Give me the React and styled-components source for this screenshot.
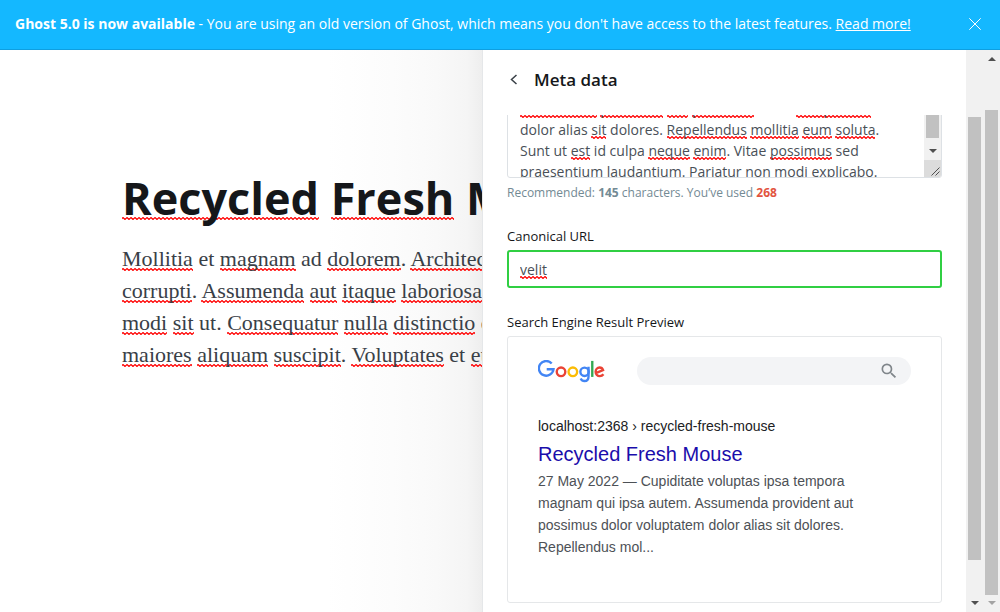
import React from "react";
import styled, { createGlobalStyle } from "styled-components";
import { MdSearch } from "react-icons/md";

const wave = `url("data:image/svg+xml,${encodeURIComponent(
  '<svg xmlns="http://www.w3.org/2000/svg" width="4" height="3"><path d="M-1 3L1 1L3 3L5 1" transform="translate(0 -0.5)" fill="none" stroke="#f00" stroke-width="1.2"/></svg>'
)}")`;

const GlobalStyle = createGlobalStyle`
  *, *::before, *::after { box-sizing: border-box; }
  html, body { margin: 0; height: 100%; }
  #root { height: 100%; }
  body {
    font-family: "Open Sans", "Noto Sans", sans-serif;
    color: #15171a;
    background: #fff;
    overflow: hidden;
  }
`;

const Page = styled.div`
  display: flex;
  flex-direction: column;
  height: 100vh;
`;

const Banner = styled.header`
  display: flex;
  align-items: center;
  justify-content: space-between;
  flex: none;
  height: 50px;
  padding: 0 18px 2px 15px;
  border-bottom: 1px solid #0f9fe0;
  background: #14b8ff;
  color: #fff;
  font-size: 14px;
  line-height: 20px;
  white-space: nowrap;
`;

const BannerText = styled.p`
  margin: 0;
`;

const BannerLink = styled.a`
  color: inherit;
  text-decoration: underline;
`;

const IconButton = styled.button`
  display: flex;
  align-items: center;
  justify-content: center;
  width: ${(p) => p.$size}px;
  height: ${(p) => p.$size}px;
  padding: 0;
  border: 0;
  background: none;
  color: inherit;
`;

const Workspace = styled.div`
  display: flex;
  flex: 1;
  min-height: 0;
`;

const Editor = styled.main`
  flex: 1;
  min-width: 0;
  overflow: hidden;
  padding: 116px 0 0 122px;
  background: linear-gradient(to left, #eee 0, #f5f5f5 15px, #f9f9f9 45px, #fcfcfc 90px, #fff 155px);
  white-space: nowrap;
`;

const PostTitle = styled.h1`
  margin: 0;
  font-size: 45px;
  line-height: 64px;
  font-weight: 700;
`;

const PostBody = styled.p`
  margin: 13px 0 0;
  font-family: "Liberation Serif", serif;
  font-size: 22px;
  line-height: 32px;
  color: #394047;
`;

const Misspelt = styled.span`
  background: ${wave} repeat-x 0 calc(100% - ${(p) => p.$lift}px);
`;

const Panel = styled.aside`
  display: flex;
  flex-direction: column;
  flex: none;
  width: 484px;
  border-left: 1px solid #e5e7e9;
  background: #fff;
`;

const PanelHeader = styled.div`
  display: flex;
  align-items: center;
  gap: 10px;
  flex: none;
  height: 65px;
  padding: 0 24px 6px 20px;
  color: #394047;
`;

const PanelTitle = styled.h2`
  margin: 0;
  color: #15171a;
  font-size: 17px;
  line-height: 24px;
  font-weight: 600;
`;

const PanelBody = styled.form`
  flex: 1;
  min-height: 0;
  overflow: hidden;
  padding: 0 24px;
`;

const Field = styled.div`
  display: flex;
  flex-direction: column;
  margin-bottom: 25px;
`;

const DescriptionField = styled(Field)`
  margin: -27px 0 24px;
`;

const Label = styled.label`
  margin-bottom: 5px;
  font-size: 13px;
  line-height: 18px;
`;

const Control = styled.div`
  display: grid;
  grid-template-columns: 1fr ${(p) => (p.$scroll ? "17px" : "")};
  height: ${(p) => p.$height}px;
  border: ${(p) => (p.$valid ? "2px solid #30cf43" : "1px solid #dde1e5")};
  border-radius: 3px;
  overflow: hidden;
  font-family: "Open Sans", "Noto Sans", sans-serif;
  font-size: 14px;
  line-height: 21px;
`;

const textLayer = `
  grid-area: 1 / 1;
  width: 100%;
  min-width: 0;
  height: 100%;
  margin: 0;
  border: 0;
  outline: 0;
  background: transparent;
  color: #495057;
  font: inherit;
`;

const TextArea = styled.textarea`
  ${textLayer}
  padding: 9px 12px;
  white-space: pre;
  overflow: hidden;
  resize: none;
`;

const TextInput = styled.input`
  ${textLayer}
  padding: 1px 11px 0;
`;

const Marks = styled.div`
  display: flex;
  flex-direction: column;
  grid-area: 1 / 1;
  overflow: hidden;
  padding: ${(p) => p.$pad};
`;

const MarkLine = styled.div`
  display: flex;
  flex: none;
  align-items: flex-end;
  height: 21px;
  padding-bottom: 1px;
`;

const Mark = styled.span`
  height: 3px;
  background: ${wave} repeat-x;
`;

const AreaScroll = styled.div`
  display: flex;
  flex-direction: column;
  align-items: center;
  grid-area: 1 / 2;
  background: #f1f1f1;
`;

const AreaThumb = styled.div`
  flex: 1;
  width: 13px;
  background: #c1c1c1;
`;

const AreaDown = styled.div`
  display: flex;
  align-items: center;
  justify-content: center;
  height: 22px;
  padding-top: 4px;
  color: #505050;
`;

const Grip = styled.div`
  display: flex;
  align-items: flex-end;
  justify-content: flex-end;
  width: 100%;
  height: 17px;
  padding: 0 1px 1px 0;
  background: #dcdcdc;
`;

const Hint = styled.p`
  margin: 5px 0 0;
  color: #738a94;
  font-size: 12px;
  line-height: 20px;
`;

const Over = styled.b`
  color: #e25440;
`;

const Card = styled.section`
  padding: 20px 30px 44px;
  border: 1px solid #e5e7e9;
  border-radius: 3px;
  font-family: "Liberation Sans", Arial, sans-serif;
`;

const CardTop = styled.div`
  display: flex;
  align-items: center;
  gap: 32px;
  margin-bottom: 30px;
`;

const SearchPill = styled.div`
  display: flex;
  align-items: center;
  justify-content: flex-end;
  flex: 1;
  height: 28px;
  padding-right: 12px;
  border-radius: 14px;
  background: #f3f4f6;
  color: #80868b;
`;

const ResultUrl = styled.div`
  color: #202124;
  font-size: 14px;
  line-height: 22px;
`;

const ResultTitle = styled.a`
  display: block;
  margin: 4px 0 3px;
  color: #1a0dab;
  font-size: 20px;
  line-height: 26px;
  text-decoration: none;
`;

const ResultText = styled.p`
  margin: 0;
  padding-right: 30px;
  color: #4d5156;
  font-size: 14px;
  line-height: 22px;
`;

const Track = styled.div`
  display: flex;
  flex-direction: column;
  align-items: center;
  flex: none;
  width: 17px;
  padding: 7px 0;
  background: #f1f1f1;
  color: #505050;
`;

const Thumb = styled.div`
  flex: 1;
  width: 13px;
  margin: ${(p) => p.$margin};
  background: #c1c1c1;
`;

const Arrow = ({ up, faint }) => (
  <svg width="8" height="4" viewBox="0 0 8 4" aria-hidden="true">
    <path d={up ? "M4 0L8 4H0z" : "M0 0H8L4 4z"} fill={faint ? "#a3a3a3" : "currentColor"} />
  </svg>
);

const GoogleLogo = () => (
  <svg width="67" height="23" viewBox="0 0 272 92" role="img" aria-label="Google" fill="none" strokeWidth="9.6">
    <path d="M55.6 13.3A29.75 29.75 0 1 0 63 36.7H35.3" stroke="#4285f4" />
    <circle cx="93.5" cy="47.2" r="17.4" stroke="#ea4335" />
    <circle cx="141.5" cy="47.2" r="17.4" stroke="#fbbc05" />
    <circle cx="189" cy="47.2" r="17" stroke="#4285f4" />
    <path d="M205.1 26.3V66C205.1 78 199 84.700 188.700 84.700C181 84.700 176 80 173.200 74.400" stroke="#4285f4" />
    <path d="M220.300 3V68" stroke="#34a853" />
    <path d="M265.800 57C262 62 257.500 64.600 251.100 64.600C241 64.600 233.900 57 233.900 47.200C233.900 37 241 29.800 250 29.800C257 29.800 262 34 264.200 40.600L237 51.900" stroke="#ea4335" />
  </svg>
);

// Splits on *word* markers and underlines the marked words.
const Spelled = ({ text, lift }) =>
  text.split("*").map((part, i) =>
    i % 2 ? (
      <Misspelt key={i} $lift={lift}>
        {part}
      </Misspelt>
    ) : (
      part
    )
  );

const measure = (() => {
  const context = document.createElement("canvas").getContext("2d");
  return (text) => {
    context.font = '14px "Open Sans"';
    return context.measureText(text).width;
  };
})();

// Form fields hold plain text, so their underlines are measured and laid behind it.
const SpellMarks = ({ text, pad }) => (
  <Marks $pad={pad} aria-hidden="true">
    {text.split("\n").map((line) => (
      <MarkLine key={line}>
        {line.split("*").map((part, i) => {
          const width = measure(part);
          return i % 2 ? <Mark key={i} style={{ width }} /> : <span key={i} style={{ width }} />;
        })}
      </MarkLine>
    ))}
  </Marks>
);

const bodyLines = [
  "*Mollitia* et *magnam* ad *dolorem*. *Architecto* *ut*",
  "*corrupti*. *Assumenda* *aut* *itaque* *laboriosam* et",
  "*modi* *sit* ut. *Consequatur* *nulla* *distinctio* et",
  "*maiores* *aliquam* *suscipit*. *Voluptates* et *eum*",
];

const description = [
  "*Assumenda* *provident* *aut* *possimus* dolor *voluptatem*",
  "dolor alias *sit* dolores. *Repellendus* *mollitia* *eum* *soluta*.",
  "Sunt ut *est* id culpa *neque* *enim*. Vitae *possimus* sed",
  "praesentium laudantium. Pariatur non modi explicabo.",
].join("\n");

const plain = (text) => text.replaceAll("*", "");

export default function App() {
  return (
    <>
      <GlobalStyle />
      <Page>
        <Banner>
          <BannerText>
            <b>Ghost 5.0 is now available</b> - You are using an old version of Ghost, which means you don't have
            access to the latest features. <BannerLink href="#update">Read more!</BannerLink>
          </BannerText>
          <IconButton type="button" $size={14} aria-label="Dismiss">
            <svg width="12" height="12" viewBox="0 0 12 12" stroke="currentColor" aria-hidden="true">
              <path d="M0.300 0.300L11.700 11.700M11.700 0.300L0.300 11.700" />
            </svg>
          </IconButton>
        </Banner>
        <Workspace>
          <Editor>
            <PostTitle>
              <Spelled text="*Recycled* *Fresh* Mouse" lift={8} />
            </PostTitle>
            <PostBody>
              {bodyLines.map((line) => (
                <React.Fragment key={line}>
                  <Spelled text={line} lift={0} />
                  <br />
                </React.Fragment>
              ))}
            </PostBody>
          </Editor>
          <Panel>
            <PanelHeader>
              <IconButton type="button" $size={21} aria-label="Back">
                <svg width="8" height="12" viewBox="0 0 8 12" fill="none" stroke="currentColor" strokeWidth="1.500" aria-hidden="true">
                  <path d="M6.500 1L1.500 5.500L6.500 10" />
                </svg>
              </IconButton>
              <PanelTitle>Meta data</PanelTitle>
            </PanelHeader>
            <PanelBody>
              <DescriptionField>
                <Control $height={90} $scroll>
                  <SpellMarks text={description} pad="9px 12px" />
                  <TextArea aria-label="Meta description" spellCheck={false} defaultValue={plain(description)} />
                  <AreaScroll>
                    <AreaThumb />
                    <AreaDown>
                      <Arrow />
                    </AreaDown>
                    <Grip>
                      <svg width="9" height="9" viewBox="0 0 9 9" stroke="#505050" aria-hidden="true">
                        <path d="M0.500 8.500L8.500 0.500M4.500 8.500L8.500 4.500" />
                      </svg>
                    </Grip>
                  </AreaScroll>
                </Control>
                <Hint>
                  Recommended: <b>145</b> characters. You’ve used <Over>268</Over>
                </Hint>
              </DescriptionField>
              <Field>
                <Label htmlFor="canonical">Canonical URL</Label>
                <Control $height={38} $valid>
                  <SpellMarks text="*velit*" pad="7px 11px 0" />
                  <TextInput id="canonical" spellCheck={false} defaultValue="velit" />
                </Control>
              </Field>
              <Field>
                <Label as="div">Search Engine Result Preview</Label>
                <Card>
                  <CardTop>
                    <GoogleLogo />
                    <SearchPill>
                      <MdSearch size={20} />
                    </SearchPill>
                  </CardTop>
                  <ResultUrl>localhost:2368 › recycled-fresh-mouse</ResultUrl>
                  <ResultTitle href="#result">Recycled Fresh Mouse</ResultTitle>
                  <ResultText>
                    27 May 2022 — Cupiditate voluptas ipsa tempora magnam qui ipsa autem. Assumenda provident aut
                    possimus dolor voluptatem dolor alias sit dolores. Repellendus mol...
                  </ResultText>
                </Card>
              </Field>
            </PanelBody>
          </Panel>
          <Track>
            <Thumb $margin="60px 0 41px" />
            <Arrow />
          </Track>
          <Track>
            <Arrow up />
            <Thumb $margin="49px 0 6px" />
            <Arrow faint />
          </Track>
        </Workspace>
      </Page>
    </>
  );
}
